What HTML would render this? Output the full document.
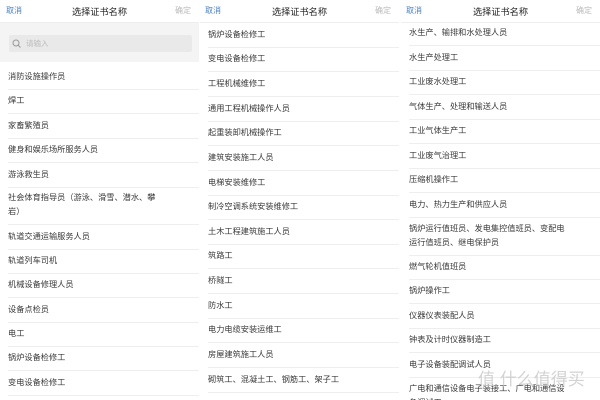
<!DOCTYPE html><html><head><meta charset="utf-8"><style>
*{margin:0;padding:0}
body{width:600px;height:400px;overflow:hidden;background:#fff;position:relative;font-family:"Liberation Sans","Noto Sans CJK SC",sans-serif;font-size:8.2px;color:#3a3a3a}
.p{position:absolute;top:0;height:400px;overflow:hidden;background:#fff}
.h{position:absolute;left:0;right:0;top:0;height:22px;background:#fff;border-bottom:1px solid #eee}
.c{position:absolute;top:5px;color:#4a7fc1;font-size:8px}
.t{position:absolute;top:4px;font-size:9.2px;color:#222;width:100%;text-align:center}
.o{position:absolute;top:5px;right:8px;color:#bbb;font-size:8px}
.i{position:absolute;white-space:nowrap;line-height:12px}
.s{position:absolute;height:1px;background:#eee}
</style></head><body>
<div class="p" style="left:0;width:199px">
 <div style="position:absolute;top:22px;left:0;right:0;height:40px;background:#f4f4f4"></div>
 <div style="position:absolute;top:35px;left:9px;width:183px;height:17px;background:#e9e9ea;border-radius:2px"></div>
 <svg style="position:absolute;left:12px;top:39px" width="9" height="9"><circle cx="4" cy="4" r="3" fill="none" stroke="#999" stroke-width="1"/><line x1="6.2" y1="6.2" x2="8.5" y2="8.5" stroke="#999"/></svg>
 <div class="i" style="left:26px;top:38px;color:#bbb;font-size:7.5px">请输入</div>
 <div class="h"><div class="c" style="left:6px">取消</div><div class="t">选择证书名称</div><div class="o">确定</div></div>
 <div class="i" style="left:8px;top:71px">消防设施操作员</div><div class="s" style="left:8px;right:0;top:89px"></div>
 <div class="i" style="left:8px;top:95px">焊工</div><div class="s" style="left:8px;right:0;top:113px"></div>
 <div class="i" style="left:8px;top:120px">家畜繁殖员</div><div class="s" style="left:8px;right:0;top:138px"></div>
 <div class="i" style="left:8px;top:144px">健身和娱乐场所服务人员</div><div class="s" style="left:8px;right:0;top:162px"></div>
 <div class="i" style="left:8px;top:169px">游泳救生员</div><div class="s" style="left:8px;right:0;top:187px"></div>
 <div class="i" style="left:8px;top:192px">社会体育指导员（游泳、滑雪、潜水、攀</div>
 <div class="i" style="left:8px;top:206px">岩）</div><div class="s" style="left:8px;right:0;top:224px"></div>
 <div class="i" style="left:8px;top:231px">轨道交通运输服务人员</div><div class="s" style="left:8px;right:0;top:249px"></div>
 <div class="i" style="left:8px;top:255px">轨道列车司机</div><div class="s" style="left:8px;right:0;top:273px"></div>
 <div class="i" style="left:8px;top:279px">机械设备修理人员</div><div class="s" style="left:8px;right:0;top:297px"></div>
 <div class="i" style="left:8px;top:304px">设备点检员</div><div class="s" style="left:8px;right:0;top:322px"></div>
 <div class="i" style="left:8px;top:328px">电工</div><div class="s" style="left:8px;right:0;top:346px"></div>
 <div class="i" style="left:8px;top:352px">锅炉设备检修工</div><div class="s" style="left:8px;right:0;top:370px"></div>
 <div class="i" style="left:8px;top:377px">变电设备检修工</div><div class="s" style="left:8px;right:0;top:395px"></div>
</div>
<div class="p" style="left:200px;width:199px">
 <div class="h"><div class="c" style="left:5px">取消</div><div class="t">选择证书名称</div><div class="o">确定</div></div>
 <div class="i" style="left:8px;top:29px">锅炉设备检修工</div><div class="s" style="left:8px;right:0;top:47px"></div>
 <div class="i" style="left:8px;top:53px">变电设备检修工</div><div class="s" style="left:8px;right:0;top:71px"></div>
 <div class="i" style="left:8px;top:78px">工程机械维修工</div><div class="s" style="left:8px;right:0;top:96px"></div>
 <div class="i" style="left:8px;top:103px">通用工程机械操作人员</div><div class="s" style="left:8px;right:0;top:121px"></div>
 <div class="i" style="left:8px;top:127px">起重装卸机械操作工</div><div class="s" style="left:8px;right:0;top:145px"></div>
 <div class="i" style="left:8px;top:152px">建筑安装施工人员</div><div class="s" style="left:8px;right:0;top:170px"></div>
 <div class="i" style="left:8px;top:177px">电梯安装维修工</div><div class="s" style="left:8px;right:0;top:195px"></div>
 <div class="i" style="left:8px;top:201px">制冷空调系统安装维修工</div><div class="s" style="left:8px;right:0;top:219px"></div>
 <div class="i" style="left:8px;top:226px">土木工程建筑施工人员</div><div class="s" style="left:8px;right:0;top:244px"></div>
 <div class="i" style="left:8px;top:250px">筑路工</div><div class="s" style="left:8px;right:0;top:268px"></div>
 <div class="i" style="left:8px;top:275px">桥隧工</div><div class="s" style="left:8px;right:0;top:293px"></div>
 <div class="i" style="left:8px;top:300px">防水工</div><div class="s" style="left:8px;right:0;top:318px"></div>
 <div class="i" style="left:8px;top:324px">电力电缆安装运维工</div><div class="s" style="left:8px;right:0;top:342px"></div>
 <div class="i" style="left:8px;top:349px">房屋建筑施工人员</div><div class="s" style="left:8px;right:0;top:367px"></div>
 <div class="i" style="left:8px;top:374px">砌筑工、混凝土工、钢筋工、架子工</div><div class="s" style="left:8px;right:0;top:392px"></div>
</div>
<div class="p" style="left:401px;width:199px">
 <div class="h"><div class="c" style="left:5px">取消</div><div class="t">选择证书名称</div><div class="o">确定</div></div>
 <div class="i" style="left:8px;top:27px">水生产、输排和水处理人员</div><div class="s" style="left:8px;right:0;top:45px"></div>
 <div class="i" style="left:8px;top:52px">水生产处理工</div><div class="s" style="left:8px;right:0;top:70px"></div>
 <div class="i" style="left:8px;top:76px">工业废水处理工</div><div class="s" style="left:8px;right:0;top:94px"></div>
 <div class="i" style="left:8px;top:101px">气体生产、处理和输送人员</div><div class="s" style="left:8px;right:0;top:119px"></div>
 <div class="i" style="left:8px;top:125px">工业气体生产工</div><div class="s" style="left:8px;right:0;top:143px"></div>
 <div class="i" style="left:8px;top:150px">工业废气治理工</div><div class="s" style="left:8px;right:0;top:168px"></div>
 <div class="i" style="left:8px;top:174px">压缩机操作工</div><div class="s" style="left:8px;right:0;top:192px"></div>
 <div class="i" style="left:8px;top:199px">电力、热力生产和供应人员</div><div class="s" style="left:8px;right:0;top:217px"></div>
 <div class="i" style="left:8px;top:223px">锅炉运行值班员、发电集控值班员、变配电</div>
 <div class="i" style="left:8px;top:237px">运行值班员、继电保护员</div><div class="s" style="left:8px;right:0;top:255px"></div>
 <div class="i" style="left:8px;top:261px">燃气轮机值班员</div><div class="s" style="left:8px;right:0;top:279px"></div>
 <div class="i" style="left:8px;top:285px">锅炉操作工</div><div class="s" style="left:8px;right:0;top:303px"></div>
 <div class="i" style="left:8px;top:310px">仪器仪表装配人员</div><div class="s" style="left:8px;right:0;top:328px"></div>
 <div class="i" style="left:8px;top:334px">钟表及计时仪器制造工</div><div class="s" style="left:8px;right:0;top:352px"></div>
 <div class="i" style="left:8px;top:359px">电子设备装配调试人员</div><div class="s" style="left:8px;right:0;top:377px"></div>
 <div class="i" style="left:8px;top:383px">广电和通信设备电子装接工、广电和通信设</div>
 <div class="i" style="left:8px;top:397px">备调试工</div>
 <div class="i" style="left:77px;top:374px;font-size:17px;color:rgba(200,200,200,.8)">值 什么值得买</div>
</div>
</body></html>
